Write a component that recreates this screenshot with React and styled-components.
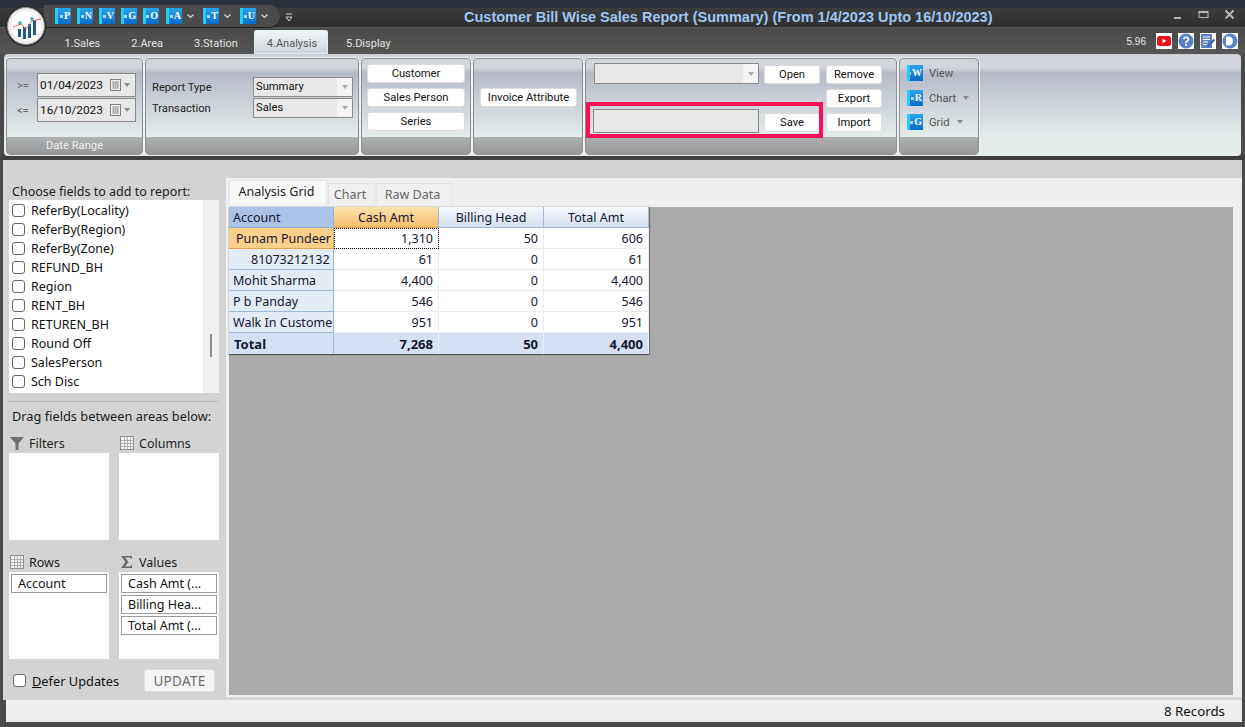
import React from 'react';
import styled, { createGlobalStyle } from 'styled-components';

const GlobalStyle = createGlobalStyle`
  html, body {
    margin: 0;
    height: 100%;
    overflow: hidden;
  }
  body {
    font-family: "Noto Sans", "Liberation Sans", sans-serif;
    font-size: 12px;
    color: #111;
  }
`;

const Window = styled.div`
  position: relative;
  width: 1245px;
  height: 727px;
  display: flex;
  flex-direction: column;
  background: #4a4a4a;
  overflow: hidden;
`;

const TopStrip = styled.div`
  height: 8px;
  background: #2c323b;
`;

const TitleBar = styled.div`
  height: 20px;
  display: flex;
  align-items: center;
  position: relative;
  background: linear-gradient(#3c3c3c, #2f2f2f);
  border-bottom: 1px solid #555;
  box-sizing: border-box;
  padding-left: 44px;
`;

const Logo = styled.svg`
  position: absolute;
  left: 5px;
  top: 5px;
  width: 42px;
  height: 42px;
  z-index: 3;
`;

const QuickBar = styled.div`
  position: absolute;
  left: 44px;
  top: -3px;
  width: 236px;
  height: 22px;
  padding-left: 11px;
  box-sizing: border-box;
  display: flex;
  align-items: center;
  background: #4b4b4b;
  border-radius: 0 12px 12px 0;
  box-shadow: 0 1px 0 #222;
`;

const BlueIcon = styled.span`
  width: 16px;
  height: 16px;
  flex: none;
  box-sizing: border-box;
  display: flex;
  align-items: center;
  justify-content: flex-end;
  padding-right: 1px;
  margin-right: ${({ $gap }) => $gap}px;
  border-left: 3px solid #25cdf2;
  background: linear-gradient(#2aa3ea, #0a6bca);
  color: #fff;
  font-family: "Liberation Serif", serif;
  font-weight: bold;
  font-size: 10px;
  line-height: 1;

  &::before {
    content: '';
    width: 3px;
    height: 3px;
    background: #a8dcf8;
    margin-right: 1px;
  }
`;

const QuickChevron = styled.svg`
  width: 7px;
  height: 5px;
  flex: none;
  margin-right: ${({ $gap }) => $gap}px;
`;

const OverflowMark = styled.svg`
  position: absolute;
  left: 285px;
  top: 5px;
  width: 8px;
  height: 9px;
`;

const Title = styled.div`
  position: absolute;
  left: 464px;
  top: -1px;
  font-family: "Liberation Sans", sans-serif;
  font-weight: bold;
  font-size: 14.5px;
  line-height: 20px;
  white-space: nowrap;
  color: #9fc5f2;
`;

const WindowButtons = styled.div`
  position: absolute;
  right: 10px;
  top: 1px;
  display: flex;
  align-items: center;
  gap: 15px;
  color: #b4b8bc;
`;

const WinIcon = styled.svg`
  width: 11px;
  height: 11px;
  display: block;
`;

const TabBar = styled.div`
  height: 26px;
  display: flex;
  align-items: flex-end;
  padding-left: 49px;
  background: linear-gradient(#4a4a4a, #565656);
  position: relative;
`;

const Tab = styled.div`
  height: 24px;
  padding: ${({ $active }) => ($active ? '2px 11px 0 13px' : '2px 15.5px 0')};
  margin: ${({ $active }) => ($active ? '0 2.5px 0 0.5px' : '0')};
  box-sizing: border-box;
  display: flex;
  align-items: center;
  font-family: Roboto, sans-serif;
  font-size: 11px;
  white-space: nowrap;
  color: ${({ $active }) => ($active ? '#555' : '#e2e2e2')};
  border-radius: 3px 3px 0 0;
  ${({ $active }) =>
    $active &&
    `
    background: linear-gradient(#f2f8fa, #ccd2d9);
    box-shadow: inset 0 0 0 1px #d6f0f4;
  `}
`;

const TabTools = styled.div`
  position: absolute;
  right: 7px;
  top: 5px;
  display: flex;
  align-items: center;
  gap: 6px;
`;

const Version = styled.span`
  font-family: "Liberation Sans", sans-serif;
  font-size: 10px;
  color: #e6e6e6;
  margin-right: 4px;
`;

const ToolIcon = styled.svg`
  width: 16px;
  height: 16px;
  display: block;
  background: #fff;
`;

const Ribbon = styled.div`
  height: 102px;
  margin: 0 4px 0 4px;
  padding: 3px 2px 0;
  box-sizing: border-box;
  display: flex;
  gap: 2px;
  border-radius: 4px;
  border-top: 1px solid #c8ccd2;
  font-family: Roboto, sans-serif;
  background: linear-gradient(#d2d5db 0, #d2d5db 12px, #b5bac6 18px, #e5edec 82px);
`;

const Group = styled.section`
  position: relative;
  width: ${({ $w }) => $w}px;
  height: 97px;
  box-sizing: border-box;
  display: flex;
  flex-direction: column;
  border: 1px solid #8d9094;
  border-radius: 4px;
  outline: 1px solid #eef0f0;
`;

const GroupBody = styled.div`
  height: 78px;
  flex: none;
  box-sizing: border-box;
  display: flex;
`;

const Caption = styled.div`
  flex: 1;
  display: flex;
  align-items: center;
  justify-content: center;
  font-size: 11.2px;
  color: #f0f0f0;
  background: linear-gradient(#adafb0, #96989a);
  border-radius: 0 0 3px 3px;
`;

const DateGrid = styled.div`
  display: grid;
  grid-template-columns: 20px 99px;
  grid-auto-rows: 24px;
  row-gap: 1px;
  align-items: center;
  margin: 14px 0 0 10px;
`;

const Operator = styled.span`
  font-size: 11px;
  color: #666;
`;

const Field = styled.div`
  height: ${({ $h }) => $h || 24}px;
  box-sizing: border-box;
  display: flex;
  align-items: center;
  padding-left: 2px;
  background: #e8e8e8;
  border: 1px solid #8a8a8a;
  font-size: 11.2px;
  color: #111;
`;

const NameCombo = styled(Field)`
  margin-top: -2px;
`;

const NameInput = styled(Field)`
  grid-row: 3;
  grid-column: 1;
  margin: -4px 0 0 -1px;
`;

const DateValue = styled.span`
  flex: 1;
  font-size: 11.8px;
`;

const Calendar = styled.svg`
  width: 11px;
  height: 12px;
  margin-right: 3px;
`;

const SmallArrow = styled.svg`
  width: 6px;
  height: 4px;
  margin-left: ${({ $left }) => $left || 0}px;
  margin-right: ${({ $gap }) => $gap ?? 5}px;
`;

const ComboValue = styled.span`
  flex: 1;
  padding-bottom: 2px;
`;

const ComboButton = styled.span`
  width: 15px;
  align-self: stretch;
  display: flex;
  align-items: center;
  justify-content: center;
  background: #f4f4f4;
`;

const ReportGrid = styled.div`
  display: grid;
  grid-template-columns: 101px 100px;
  grid-auto-rows: 20px;
  row-gap: 1px;
  align-items: center;
  margin: 18px 0 0 6px;
`;

const Label = styled.span`
  font-size: 11.2px;
  color: #222;
`;

const ButtonStack = styled.div`
  display: flex;
  flex-direction: column;
  gap: 5px;
  margin: ${({ $top }) => $top}px 0 0 ${({ $left }) => $left}px;
`;

const RibbonButton = styled.button`
  width: ${({ $w }) => $w}px;
  height: 19px;
  padding: 0;
  border: 1px solid #dcdcdc;
  border-radius: 3px;
  background: #fff;
  font-family: Roboto, sans-serif;
  font-size: 11.2px;
  color: #111;
  line-height: 1;
  grid-column: ${({ $col }) => $col || 'auto'};
  grid-row: ${({ $row }) => $row || 'auto'};
`;

const SaveArea = styled.div`
  display: grid;
  grid-template-columns: 165px 57px 56px;
  grid-template-rows: repeat(3, 19px);
  gap: 5px;
  margin: 6px 0 0 8px;
`;

const Highlight = styled.div`
  position: absolute;
  left: 0;
  top: 43px;
  width: 237px;
  height: 36px;
  box-sizing: border-box;
  border: 4px solid #ff0a54;
  pointer-events: none;
`;

const ViewList = styled.div`
  display: grid;
  grid-template-rows: 26px 24px 24px;
  align-items: center;
  margin: 1px 0 0 7px;
`;

const ViewRow = styled.div`
  display: flex;
  align-items: center;
  gap: 6px;
  font-size: 11.2px;
  color: #555;
`;

const Divider = styled.div`
  height: 4px;
  background: #3f3f3f;
`;

const Main = styled.main`
  flex: 1;
  min-height: 0;
  margin: 0 3px;
  display: flex;
  background: #d3d3d3;
`;

const LeftPane = styled.aside`
  width: 223px;
  flex: none;
  padding: 24px 0 0 6px;
  box-sizing: border-box;
`;

const PaneText = styled.div`
  height: ${({ $h }) => $h}px;
  line-height: ${({ $h }) => $h}px;
  font-size: ${({ $size }) => $size || 12.5}px;
  padding-left: 3px;
  white-space: nowrap;
  color: #1c1c1c;
`;

const FieldList = styled.div`
  width: 210px;
  height: 193px;
  display: flex;
  background: #fff;
`;

const FieldRows = styled.div`
  flex: 1;
  padding-top: 1px;
`;

const FieldRow = styled.label`
  height: 19px;
  display: flex;
  align-items: center;
  gap: 6px;
  padding-left: 3px;
  font-size: 12.5px;
`;

const Check = styled.span`
  width: 13px;
  height: 13px;
  flex: none;
  box-sizing: border-box;
  border: 1px solid #666;
  border-radius: 3px;
  background: #fff;
`;

const ScrollTrack = styled.div`
  width: 16px;
  position: relative;
  background: #f0f0f0;
`;

const ScrollThumb = styled.div`
  position: absolute;
  left: 7px;
  top: 134px;
  width: 2px;
  height: 23px;
  background: #8c8c8c;
`;

const DottedRule = styled.div`
  width: 209px;
  margin-top: 8px;
  border-top: 1px dotted #9a9a9a;
`;

const AreaGrid = styled.div`
  width: 210px;
  display: grid;
  grid-template-columns: 100px 100px;
  column-gap: 10px;
  margin-top: 3px;
`;

const AreaTitle = styled.div`
  height: 20px;
  display: flex;
  align-items: center;
  gap: 5px;
  font-size: 12.5px;
  color: #1c1c1c;
  margin-top: ${({ $top }) => $top || 0}px;
`;

const AreaIcon = styled.svg`
  width: 14px;
  height: 14px;
  margin-left: 1px;
`;

const AreaBox = styled.div`
  height: 87px;
  box-sizing: border-box;
  padding: 2px;
  display: flex;
  flex-direction: column;
  gap: 2px;
  background: #fff;
`;

const Chip = styled.div`
  height: 19px;
  box-sizing: border-box;
  padding-left: 6px;
  display: flex;
  align-items: center;
  border: 1px solid #999;
  font-size: 12.5px;
  white-space: nowrap;
  overflow: hidden;
`;

const DeferRow = styled.div`
  width: 206px;
  height: 23px;
  margin-top: 10px;
  padding-left: 4px;
  box-sizing: border-box;
  display: flex;
  align-items: center;
  justify-content: space-between;
  font-size: 12.8px;
`;

const DeferLabel = styled.label`
  display: flex;
  align-items: center;
  gap: 6px;
`;

const UpdateButton = styled.button`
  width: 71px;
  height: 23px;
  padding: 0;
  border: 1px solid #e0e0e0;
  border-radius: 3px;
  background: #f4f4f4;
  font-family: inherit;
  font-size: 13.5px;
  letter-spacing: 0.3px;
  color: #6d6d6d;
`;

const RightPane = styled.div`
  flex: 1;
  min-width: 0;
  margin: 18px 0 3px 0;
  padding: 2px 9px 2px 3px;
  display: flex;
  flex-direction: column;
  background: #efefef;
`;

const SheetTabs = styled.div`
  height: 25px;
  display: flex;
  align-items: flex-end;
  gap: 1px;
  flex: none;
`;

const SheetTab = styled.div`
  height: ${({ $active }) => ($active ? 25 : 22)}px;
  width: ${({ $w }) => $w}px;
  padding: 0 3px ${({ $active }) => ($active ? 4 : 1)}px 0;
  box-sizing: border-box;
  display: flex;
  align-items: center;
  justify-content: center;
  font-size: 12.5px;
  color: ${({ $active }) => ($active ? '#222' : '#666')};
  background: ${({ $active }) => ($active ? '#f8f8f8' : '#f0f0f0')};
  border: 1px solid #e4e4e4;
  border-bottom: none;
`;

const GridArea = styled.div`
  flex: 1;
  min-height: 0;
  margin-top: 2px;
  background: #ababab;
`;

const PivotTable = styled.table`
  width: 420px;
  table-layout: fixed;
  border-collapse: separate;
  border-spacing: 0;
  background: #fff;
  box-shadow: 0 1px 1px #555, 1px 0 1px #777;
  font-size: 12.5px;
  color: #151530;
`;

const HeadCell = styled.th`
  height: 21px;
  padding: 0;
  box-sizing: border-box;
  font-weight: normal;
  text-align: center;
  background: ${({ $selected }) =>
    $selected
      ? 'linear-gradient(#fde3ae, #f6bd6c)'
      : 'linear-gradient(#f6f9fc, #d5e0ef)'};
  border-right: 1px solid #9db8d8;
  border-bottom: 1px solid ${({ $selected }) => ($selected ? '#e9a04a' : '#9db8d8')};
`;

const CornerCell = styled.th`
  padding: 0 0 0 4px;
  font-weight: normal;
  text-align: left;
  background: #a9c4e8;
  border-right: 1px solid #8fb0d8;
  border-bottom: 1px solid #8fb0d8;
`;

const RowHead = styled.td`
  height: 21px;
  padding: 0 0 0 ${({ $indent }) => $indent || 4}px;
  box-sizing: border-box;
  overflow: hidden;
  white-space: nowrap;
  background: ${({ $selected }) => ($selected ? '#fbd08a' : '#e3ebf7')};
  border-right: 1px solid ${({ $selected }) => ($selected ? '#e9a04a' : '#9db8d8')};
  border-bottom: 1px solid ${({ $selected }) => ($selected ? '#e9a04a' : '#9db8d8')};
`;

const ValueCell = styled.td`
  padding: 0 5px 0 0;
  text-align: right;
  border-right: 1px solid #e8edf4;
  border-bottom: 1px solid #e8edf4;
  ${({ $focused }) => $focused && 'outline: 1px dotted #000; outline-offset: -1px;'}
`;

const TotalHead = styled.td`
  height: 21px;
  padding: 0 0 0 5px;
  box-sizing: border-box;
  font-weight: bold;
  font-size: 13px;
  background: #d5e1f3;
  border-right: 1px solid #9db8d8;
`;

const TotalCell = styled.td`
  padding: 0 5px 0 0;
  text-align: right;
  font-weight: bold;
  font-size: 13px;
  background: #d5e1f3;
  border-right: 1px solid #eef2f8;
`;

const StatusBar = styled.footer`
  height: 22px;
  margin: 0 3px 5px 6px;
  padding-right: 17px;
  display: flex;
  align-items: center;
  justify-content: flex-end;
  flex: none;
  font-size: 13.3px;
  background: #eeeeee;
`;

const Arrow = ({ color = '#8a8a8a', gap, left }) => (
  <SmallArrow viewBox="0 0 6 4" $gap={gap} $left={left}>
    <path d="M0 0h6L3 4z" fill={color} />
  </SmallArrow>
);

const Chevron = ({ gap }) => (
  <QuickChevron viewBox="0 0 7 5" $gap={gap}>
    <path d="M0.5 0.5 3.5 3.5 6.5 0.5" fill="none" stroke="#d8d8d8" strokeWidth="1.2" />
  </QuickChevron>
);

const CalendarIcon = () => (
  <Calendar viewBox="0 0 11 12">
    <rect x="0.5" y="0.5" width="10" height="11" fill="#efefef" stroke="#808080" />
    <path d="M2 3h7M2 5h7M2 7h7M2 9h7M3.5 2.5v7M5.5 2.5v7M7.5 2.5v7" stroke="#9a9a9a" strokeWidth="0.8" />
  </Calendar>
);

const GridIcon = () => (
  <AreaIcon viewBox="0 0 14 14">
    <rect x="0.5" y="0.5" width="13" height="13" fill="#f4f4f4" stroke="#8a8a8a" />
    <path d="M0 4.5h14M0 7.5h14M0 10.5h14M4.5 0v14M7.5 0v14M10.5 0v14" stroke="#a0a0a0" strokeWidth="0.8" />
  </AreaIcon>
);

const fields = [
  'ReferBy(Locality)',
  'ReferBy(Region)',
  'ReferBy(Zone)',
  'REFUND_BH',
  'Region',
  'RENT_BH',
  'RETUREN_BH',
  'Round Off',
  'SalesPerson',
  'Sch Disc',
];

const rows = [
  { name: 'Punam Pundeer', cash: '1,310', head: '50', total: '606', indent: 7, selected: true },
  { name: '81073212132', cash: '61', head: '0', total: '61', indent: 22 },
  { name: 'Mohit Sharma', cash: '4,400', head: '0', total: '4,400' },
  { name: 'P b Panday', cash: '546', head: '0', total: '546' },
  { name: 'Walk In Custome', cash: '951', head: '0', total: '951' },
];

const App = () => (
  <Window>
    <GlobalStyle />
    <TopStrip />
    <TitleBar>
      <QuickBar>
        <BlueIcon $gap={6}>P</BlueIcon>
        <BlueIcon $gap={6}>N</BlueIcon>
        <BlueIcon $gap={6}>V</BlueIcon>
        <BlueIcon $gap={6}>G</BlueIcon>
        <BlueIcon $gap={7}>O</BlueIcon>
        <BlueIcon $gap={5}>A</BlueIcon>
        <Chevron gap={9} />
        <BlueIcon $gap={5}>T</BlueIcon>
        <Chevron gap={9} />
        <BlueIcon $gap={5}>U</BlueIcon>
        <Chevron gap={0} />
      </QuickBar>
      <OverflowMark viewBox="0 0 8 9">
        <path d="M1 1h6M1 4h6L4 8z" fill="none" stroke="#cfcfcf" />
      </OverflowMark>
      <Title>Customer Bill Wise Sales Report (Summary) (From 1/4/2023 Upto 16/10/2023)</Title>
      <WindowButtons>
        <WinIcon viewBox="0 0 11 11">
          <path d="M2 9h7" stroke="currentColor" strokeWidth="2" />
        </WinIcon>
        <WinIcon viewBox="0 0 11 11">
          <rect x="1" y="2.5" width="9" height="6" fill="none" stroke="currentColor" />
          <path d="M1 3h9" stroke="currentColor" strokeWidth="2" />
        </WinIcon>
        <WinIcon viewBox="0 0 11 11">
          <path d="M1.5 1.5l8 8M9.5 1.5l-8 8" stroke="currentColor" strokeWidth="2" />
        </WinIcon>
      </WindowButtons>
    </TitleBar>
    <Logo viewBox="0 0 42 42">
      <circle cx="21" cy="21" r="20.5" fill="#2d2d2d" />
      <circle cx="21" cy="21" r="18.5" fill="#ededed" stroke="#8c8c8c" />
      <circle cx="21" cy="21" r="15" fill="#fff" />
      <path d="M13 24h3v8h-3zM18 22h3v12h-3zM23 19h3v14h-3zM28 15h3v15h-3z" fill="#1f5c83" />
      <path d="M8 22 16 19 21 24 27 16 36 14" fill="none" stroke="#e36a6a" strokeWidth="1" />
      <circle cx="15" cy="18" r="1.8" fill="#3fa6a6" />
      <circle cx="27" cy="14" r="1.8" fill="#3fa6a6" />
    </Logo>
    <TabBar>
      <Tab>1.Sales</Tab>
      <Tab>2.Area</Tab>
      <Tab>3.Station</Tab>
      <Tab $active>4.Analysis</Tab>
      <Tab>5.Display</Tab>
      <TabTools>
        <Version>5.96</Version>
        <ToolIcon viewBox="0 0 16 16">
          <rect x="1" y="3" width="14" height="10" rx="2.5" fill="#e8101a" />
          <path d="M6.5 5.8v4.4L10.5 8z" fill="#fff" />
        </ToolIcon>
        <ToolIcon viewBox="0 0 16 16">
          <circle cx="8" cy="8" r="7.5" fill="#5c80c4" />
          <path d="M5.8 6.2C5.8 3.6 10.4 3.6 10.4 6.2 10.4 8 8 7.8 8 10" fill="none" stroke="#fff" strokeWidth="1.6" />
          <rect x="7.1" y="11" width="1.8" height="1.8" fill="#fff" />
        </ToolIcon>
        <ToolIcon viewBox="0 0 16 16">
          <rect x="1" y="1" width="11" height="14" fill="#5c80c4" />
          <path d="M3 4h7M3 6.5h7M3 9h5M3 11.5h4" stroke="#fff" />
          <path d="M8 13 14.5 6.5" stroke="#3f63a8" strokeWidth="2" />
        </ToolIcon>
        <ToolIcon viewBox="0 0 16 16">
          <circle cx="8" cy="8" r="7.5" fill="#5c80c4" />
          <path d="M4 3.5h3.5C12 3.5 12 12.5 7.5 12.5H4z" fill="#fff" />
        </ToolIcon>
      </TabTools>
    </TabBar>
    <Ribbon>
      <Group $w={137}>
        <GroupBody>
          <DateGrid>
            <Operator>&gt;=</Operator>
            <Field>
              <DateValue>01/04/2023</DateValue>
              <CalendarIcon />
              <Arrow />
            </Field>
            <Operator>&lt;=</Operator>
            <Field>
              <DateValue>16/10/2023</DateValue>
              <CalendarIcon />
              <Arrow />
            </Field>
          </DateGrid>
        </GroupBody>
        <Caption>Date Range</Caption>
      </Group>
      <Group $w={214}>
        <GroupBody>
          <ReportGrid>
            <Label>Report Type</Label>
            <Field $h={20}>
              <ComboValue>Summary</ComboValue>
              <ComboButton><Arrow color="#aaa" gap={0} /></ComboButton>
            </Field>
            <Label>Transaction</Label>
            <Field $h={20}>
              <ComboValue>Sales</ComboValue>
              <ComboButton><Arrow color="#aaa" gap={0} /></ComboButton>
            </Field>
          </ReportGrid>
        </GroupBody>
        <Caption />
      </Group>
      <Group $w={110}>
        <GroupBody>
          <ButtonStack $top={5} $left={5}>
            <RibbonButton $w={98}>Customer</RibbonButton>
            <RibbonButton $w={98}>Sales Person</RibbonButton>
            <RibbonButton $w={98}>Series</RibbonButton>
          </ButtonStack>
        </GroupBody>
        <Caption />
      </Group>
      <Group $w={110}>
        <GroupBody>
          <ButtonStack $top={29} $left={6}>
            <RibbonButton $w={97}>Invoice Attribute</RibbonButton>
          </ButtonStack>
        </GroupBody>
        <Caption />
      </Group>
      <Group $w={312}>
        <GroupBody>
          <SaveArea>
            <NameCombo $h={21}>
              <ComboValue />
              <ComboButton><Arrow color="#aaa" gap={0} /></ComboButton>
            </NameCombo>
            <RibbonButton $w={56}>Open</RibbonButton>
            <RibbonButton $w={56}>Remove</RibbonButton>
            <RibbonButton $w={56} $col={3} $row={2}>Export</RibbonButton>
            <NameInput />
            <RibbonButton $w={56} $col={2} $row={3}>Save</RibbonButton>
            <RibbonButton $w={56} $col={3} $row={3}>Import</RibbonButton>
          </SaveArea>
        </GroupBody>
        <Caption />
        <Highlight />
      </Group>
      <Group $w={80}>
        <GroupBody>
          <ViewList>
            <ViewRow><BlueIcon $gap={0}>W</BlueIcon>View</ViewRow>
            <ViewRow><BlueIcon $gap={0}>R</BlueIcon>Chart<Arrow gap={0} left={1} /></ViewRow>
            <ViewRow><BlueIcon $gap={0}>G</BlueIcon>Grid<Arrow gap={0} left={2} /></ViewRow>
          </ViewList>
        </GroupBody>
        <Caption />
      </Group>
    </Ribbon>
    <Divider />
    <Main>
      <LeftPane>
        <PaneText $h={16}>Choose fields to add to report:</PaneText>
        <FieldList>
          <FieldRows>
            {fields.map((field) => (
              <FieldRow key={field}>
                <Check />
                {field}
              </FieldRow>
            ))}
          </FieldRows>
          <ScrollTrack>
            <ScrollThumb />
          </ScrollTrack>
        </FieldList>
        <DottedRule />
        <PaneText $h={28} $size={12.8}>Drag fields between areas below:</PaneText>
        <AreaGrid>
          <div>
            <AreaTitle>
              <AreaIcon viewBox="0 0 14 14">
                <path d="M0 1h14L8.5 7.5V14L5.5 14V7.5z" fill="#6e6e6e" />
              </AreaIcon>
              Filters
            </AreaTitle>
            <AreaBox />
          </div>
          <div>
            <AreaTitle><GridIcon />Columns</AreaTitle>
            <AreaBox />
          </div>
          <div>
            <AreaTitle $top={12}><GridIcon />Rows</AreaTitle>
            <AreaBox>
              <Chip>Account</Chip>
            </AreaBox>
          </div>
          <div>
            <AreaTitle $top={12}>
              <AreaIcon viewBox="0 0 14 14">
                <path d="M1 1h11v3L10 2.5H5L8.5 7 5 11.5h5L12 10v3H1L5.5 7z" fill="#666" />
              </AreaIcon>
              Values
            </AreaTitle>
            <AreaBox>
              <Chip>Cash Amt (...</Chip>
              <Chip>Billing Hea...</Chip>
              <Chip>Total Amt (...</Chip>
            </AreaBox>
          </div>
        </AreaGrid>
        <DeferRow>
          <DeferLabel>
            <Check />
            <span><u>D</u>efer Updates</span>
          </DeferLabel>
          <UpdateButton>UPDATE</UpdateButton>
        </DeferRow>
      </LeftPane>
      <RightPane>
        <SheetTabs>
          <SheetTab $active $w={98}>Analysis Grid</SheetTab>
          <SheetTab $w={47}>Chart</SheetTab>
          <SheetTab $w={76}>Raw Data</SheetTab>
        </SheetTabs>
        <GridArea>
          <PivotTable>
            <colgroup>
              <col width="105" />
              <col width="105" />
              <col width="105" />
              <col width="105" />
            </colgroup>
            <thead>
              <tr>
                <CornerCell>Account</CornerCell>
                <HeadCell $selected>Cash Amt</HeadCell>
                <HeadCell>Billing Head</HeadCell>
                <HeadCell>Total Amt</HeadCell>
              </tr>
            </thead>
            <tbody>
              {rows.map((row) => (
                <tr key={row.name}>
                  <RowHead $indent={row.indent} $selected={row.selected}>{row.name}</RowHead>
                  <ValueCell $focused={row.selected}>{row.cash}</ValueCell>
                  <ValueCell>{row.head}</ValueCell>
                  <ValueCell>{row.total}</ValueCell>
                </tr>
              ))}
              <tr>
                <TotalHead>Total</TotalHead>
                <TotalCell>7,268</TotalCell>
                <TotalCell>50</TotalCell>
                <TotalCell>4,400</TotalCell>
              </tr>
            </tbody>
          </PivotTable>
        </GridArea>
      </RightPane>
    </Main>
    <StatusBar>8 Records</StatusBar>
  </Window>
);

export default App;
